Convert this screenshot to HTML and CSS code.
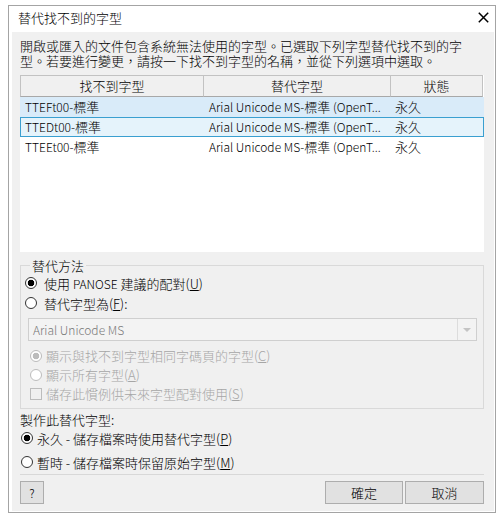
FILE: index.html
```html
<!DOCTYPE html>
<html lang="zh-Hant">
<head>
    <meta charset="UTF-8">
    <title>替代找不到的字型</title>
    <link rel="stylesheet" href="styles.css">
</head>
<body>
    <div class="window">
        <div class="titlebar">
            <span class="title">替代找不到的字型</span>
            <svg class="close" width="11" height="11" viewBox="0 0 11 11"><path d="M0.8 0.8L10.2 10.2M10.2 0.8L0.8 10.2" stroke="#000" stroke-width="1.5"/></svg>
        </div>
        <div class="client">
            <div class="desc">
                <p>開啟或匯入的文件包含系統無法使用的字型。已選取下列字型替代找不到的字</p>
                <p>型。若要進行變更，請按一下找不到字型的名稱，並從下列選項中選取。</p>
            </div>

            <div class="listbox">
                <div class="lv-head">
                    <div class="col c1">找不到字型</div>
                    <div class="col c2">替代字型</div>
                    <div class="col c3">狀態</div>
                </div>
                <div class="lv-row sel">
                    <div class="c1"><span class="en">TTEFt00-</span>標準</div>
                    <div class="c2"><span class="en">Arial Unicode MS-</span>標準<span class="en"> (OpenT...</span></div>
                    <div class="c3">永久</div>
                </div>
                <div class="lv-row focus">
                    <div class="c1"><span class="en">TTEDt00-</span>標準</div>
                    <div class="c2"><span class="en">Arial Unicode MS-</span>標準<span class="en"> (OpenT...</span></div>
                    <div class="c3">永久</div>
                </div>
                <div class="lv-row">
                    <div class="c1"><span class="en">TTEEt00-</span>標準</div>
                    <div class="c2"><span class="en">Arial Unicode MS-</span>標準<span class="en"> (OpenT...</span></div>
                    <div class="c3">永久</div>
                </div>
            </div>

            <fieldset class="group">
                <legend>替代方法</legend>
                <div class="opt"><span class="radio on"></span><span>使用 <span class="en">PANOSE</span> 建議的配對(<u>U</u>)</span></div>
                <div class="opt"><span class="radio"></span><span>替代字型為(<u>F</u>):</span></div>
                <div class="combo">
                    <span class="combo-text en">Arial Unicode MS</span>
                    <span class="combo-btn"><i class="arrow"></i></span>
                </div>
                <div class="opt sub off"><span class="radio on"></span><span>顯示與找不到字型相同字碼頁的字型(<u>C</u>)</span></div>
                <div class="opt sub off"><span class="radio"></span><span>顯示所有字型(<u>A</u>)</span></div>
                <div class="opt sub off"><span class="check"></span><span>儲存此慣例供未來字型配對使用(<u>S</u>)</span></div>
            </fieldset>

            <div class="caption">製作此替代字型:</div>
            <div class="opt mode"><span class="radio on"></span><span>永久 - 儲存檔案時使用替代字型(<u>P</u>)</span></div>
            <div class="opt mode second"><span class="radio"></span><span>暫時 - 儲存檔案時保留原始字型(<u>M</u>)</span></div>

            <div class="sep"></div>

            <div class="buttons">
                <button class="btn help">?</button>
                <button class="btn ok">確定</button>
                <button class="btn cancel">取消</button>
            </div>
        </div>
    </div>
</body>
</html>
```

FILE: styles.css
```css
* {
    margin: 0;
    padding: 0;
    box-sizing: border-box;
}
body {
    font-family: "Noto Sans CJK TC", "Noto Sans", sans-serif;
    font-size: 13px;
    font-weight: 300;
    line-height: 15px;
    color: #000;
    background-color: #fff;
}
.en {
    font-size: 12px;
}
.window {
    display: flex;
    flex-direction: column;
    width: 488px;
    height: 508px;
    margin: 5px 0 0 8px;
    border: 1px solid #a4a4a4;
    background-color: #fff;
}
.titlebar {
    flex: none;
    display: flex;
    align-items: center;
    justify-content: space-between;
    height: 26px;
    padding: 0 6px 4px 9px;
}
.client {
    flex: 1;
    display: flex;
    flex-direction: column;
    margin: 0 1px 1px 3px;
    padding: 6px 10px 7px 8px;
    background-color: #f0f0f0;
}
.desc p {
    height: 15px;
    white-space: nowrap;
}

/* list view */
.listbox {
    margin-top: 7px;
    height: 177px;
    background-color: #fff;
}
.lv-head {
    display: flex;
    height: 22px;
}
.lv-head .col {
    height: 22px;
    line-height: 20px;
    text-align: center;
    background-color: #f0f0f0;
    border: 1px solid #c2c2c2;
    border-left: none;
    border-bottom-color: #a8a8a8;
}
.lv-head .c1 {
    border-left: 1px solid #c2c2c2;
}
.c1 {
    width: 184px;
}
.c2 {
    width: 187px;
}
.c3 {
    width: 92px;
}
.lv-row {
    display: flex;
    height: 20px;
    line-height: 18px;
    border: 1px solid transparent;
    white-space: nowrap;
}
.lv-row .c1 {
    width: 183px;
    padding-left: 4px;
}
.lv-row .c2 {
    padding-left: 5px;
}
.lv-row .c3 {
    padding-left: 4px;
}
.lv-row.sel {
    background-color: #d9ebf9;
    border-color: #d9ebf9;
}
.lv-row.focus {
    background-color: #e5f3fb;
    border-color: #3a9fd0;
}

/* group box */
.group {
    margin-top: 6px;
    padding: 0 6px 5px 4px;
    border: 1px solid #d9d9d9;
}
.group legend {
    margin-left: 5px;
    padding: 0 2px;
    line-height: 15px;
}
.opt {
    display: flex;
    align-items: center;
    height: 20px;
    white-space: nowrap;
}
.radio {
    flex: none;
    width: 12px;
    height: 12px;
    margin-right: 7px;
    border: 1px solid #333;
    border-radius: 50%;
    background-color: #fff;
}
.radio.on {
    background: radial-gradient(circle, #000 0, #000 3px, #fff 3.6px);
}
.opt.sub {
    height: 19px;
    padding-left: 5px;
}
.opt.sub .radio,
.opt.sub .check {
    margin-right: 4px;
}
.opt.off {
    color: #a6a6a6;
}
.opt.off .radio {
    border-color: #bcbcbc;
}
.opt.off .radio.on {
    background: radial-gradient(circle, #bcbcbc 0, #bcbcbc 3px, #fff 3.6px);
}
.check {
    flex: none;
    width: 12px;
    height: 12px;
    border: 1px solid #bcbcbc;
}
.combo {
    display: flex;
    height: 23px;
    margin: 5px 0 5px 3px;
    border: 1px solid #cfcfcf;
    background-color: #f3f3f3;
}
.combo-text {
    flex: 1;
    padding-left: 4px;
    line-height: 21px;
    color: #7a7a7a;
}
.combo-btn {
    display: flex;
    align-items: center;
    justify-content: center;
    width: 19px;
    border-left: 1px solid #dcdcdc;
}
.arrow {
    width: 0;
    height: 0;
    border-left: 4px solid transparent;
    border-right: 4px solid transparent;
    border-top: 4px solid #c4c4c4;
}

/* bottom part */
.caption {
    margin-top: 2px;
    height: 17px;
    line-height: 17px;
}
.opt.mode {
    padding-left: 1px;
}
.opt.mode .radio {
    margin-right: 4px;
}
.opt.mode.second {
    margin-top: 4px;
}
.sep {
    margin-top: 2px;
    height: 1px;
    background-color: #d8d8d8;
}
.buttons {
    display: flex;
    margin-top: 6px;
}
.btn {
    height: 23px;
    font-family: inherit;
    font-size: 13px;
    font-weight: 300;
    line-height: 15px;
    color: #000;
    background-color: #e1e1e1;
    border: 1px solid #adadad;
}
.btn.help {
    width: 24px;
    font-size: 12px;
}
.btn.ok {
    width: 78px;
    margin-left: auto;
}
.btn.cancel {
    width: 79px;
    margin-left: 2px;
}
```
